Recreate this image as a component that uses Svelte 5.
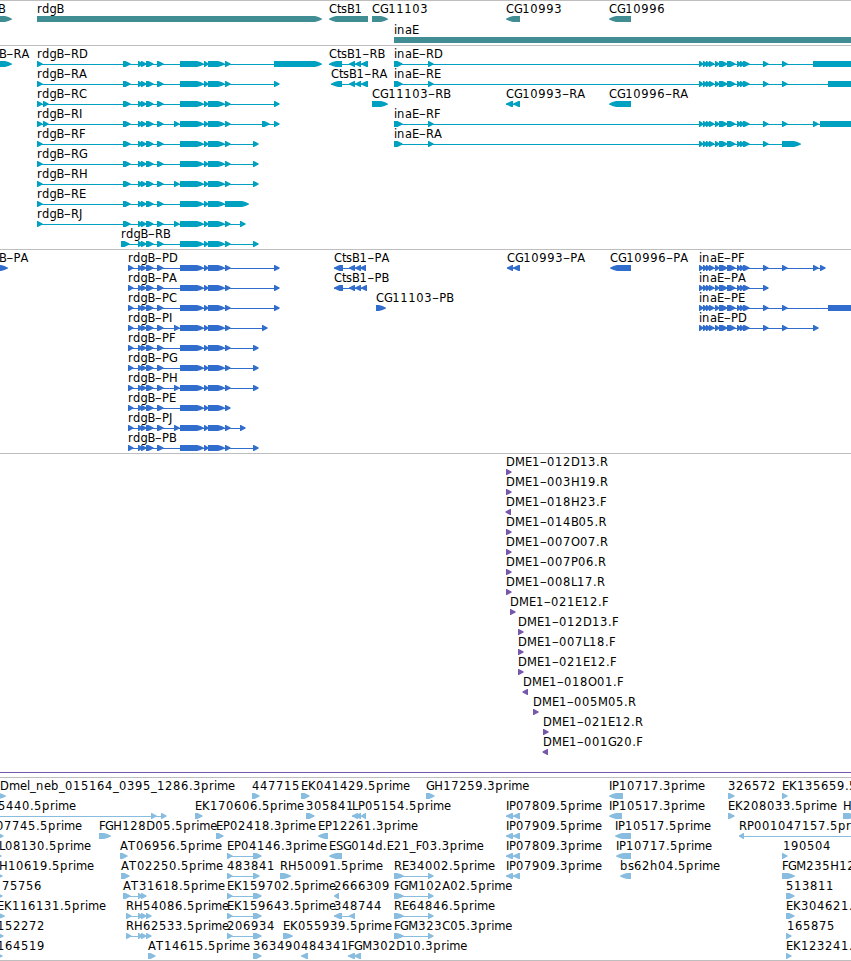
<script lang="ts">
	type Feature = {
		label: string;
		x: number;
		row: number;
		// exon blocks as [start, end]
		blocks: number[][];
		reverse?: boolean;
	};

	const width = 851;

	// glyph advances for the labels
	const advances: Record<string, number> = {
		A: 8, B: 7.5, C: 8, D: 9, E: 7, F: 6, G: 8.2, H: 9, I: 3, J: 4, K: 8, L: 6, M: 10, O: 9,
		P: 7, R: 8, S: 7, a: 7, b: 8, d: 7.5, e: 7, g: 7, h: 8, i: 3, l: 3, m: 11, n: 8, p: 8,
		r: 5, s: 6, t: 4, '-': 7, '.': 4, _: 6
	};

	// splits a label at its hyphen, which is set wider than the other glyphs
	function glyphRuns(label: string, x: number) {
		let pen = x;
		return label.split(/(-)/).map((text) => {
			const positions = [...text].map((char) => {
				const at = char === '-' ? pen - 0.5 : pen;
				pen += advances[char] ?? 8;
				return at;
			});
			return { text, positions: positions.join(' ') };
		});
	}

	function arrow([start, end]: number[], reverse = false) {
		const size = end - start;
		if (size < 10) {
			// short exons are plain triangles with a blunt back
			const back = size > 6 ? size - 5.5 : 0.8;
			if (reverse) {
				return `${end},0 ${end - back},0 ${start},2.6 ${start},3.6 ${end - back},6 ${end},6`;
			}
			const tip = end - 0.4;
			return `${start},0 ${start + back},0 ${tip},2.6 ${tip},3.6 ${start + back},6 ${start},6`;
		}
		const head = 7;
		const mid = 3.5;
		if (reverse) {
			return `${end},0 ${start + head},0 ${start + mid},0.9 ${start},2.7 ${start},3.4 ${start + mid},5.1 ${start + head},6 ${end},6`;
		}
		return `${start},0 ${end - head},0 ${end - mid},0.9 ${end},2.7 ${end},3.4 ${end - mid},5.1 ${end - head},6 ${start},6`;
	}

	const f = (
		row: number,
		x: number,
		label: string,
		blocks: number[][],
		reverse = false
	): Feature => ({ row, x, label, blocks, reverse });

	const rdgbStart = [[138, 143], [141, 147], [146, 154], [157, 164]];
	const rdgbMid = [[180, 183], [181, 204], [204, 209], [208, 225]];
	const extra = [174, 180];
	const last = [225, 231];
	const head = [[37, 43], [123, 131], ...rdgbStart];
	const core = [...rdgbStart, ...rdgbMid, last];
	const coreExtra = [...rdgbStart, extra, ...rdgbMid, last];
	const cds = [[128, 134], ...core];
	const cdsExtra = [[128, 134], ...coreExtra];

	const inaCore = [
		[699, 704], [703, 708], [706, 711], [709, 715], [715, 720], [719, 728],
		[727, 736], [737, 742], [740, 745], [743, 750], [763, 769]
	];
	const inaHead = [[394, 403], [428, 434], ...inaCore];

	const tracks = [
		{
			name: 'Genes',
			kind: 'gene',
			height: 44,
			step: 21,
			features: [
				f(0, -2, 'B', [[-20, 12]]),
				f(0, 37, 'rdgB', [[37, 322]]),
				f(0, 329, 'CtsB1', [[329, 368]], true),
				f(0, 372, 'CG11103', [[372, 388]]),
				f(0, 506, 'CG10993', [[506, 520]], true),
				f(0, 609, 'CG10996', [[609, 631]], true),
				f(1, 394, 'inaE', [[394, 900]])
			]
		},
		{
			name: 'Transcripts',
			kind: 'transcript',
			height: 203,
			step: 20,
			features: [
				f(0, -1, 'B-RA', [[-20, 12]]),
				f(0, 37, 'rdgB-RD', [[37, 43], [123, 131], ...core, [274, 322]]),
				f(1, 37, 'rdgB-RA', [[37, 43], [123, 131], ...core, [274, 280]]),
				f(2, 37, 'rdgB-RC', [[37, 43], [43, 49], [123, 131], ...core, [274, 280]]),
				f(3, 37, 'rdgB-RI', [
					[37, 43], [43, 49], [123, 131], ...coreExtra, [262, 270], [274, 280]
				]),
				f(4, 37, 'rdgB-RF', [[37, 43], [123, 131], ...core, [253, 259]]),
				f(5, 37, 'rdgB-RG', [[37, 43], [123, 131], ...core, [253, 259]]),
				f(6, 37, 'rdgB-RH', [[37, 43], [123, 131], ...coreExtra, [253, 259]]),
				f(7, 37, 'rdgB-RE', [...head, ...rdgbMid, [225, 249]]),
				f(8, 37, 'rdgB-RJ', [[37, 43], [123, 131], ...coreExtra, [240, 246]]),
				f(9, 121, 'rdgB-RB', [[121, 130], ...core, [253, 259]]),
				f(0, 329, 'CtsB1-RB', [[329, 342], [349, 355], [355, 361], [361, 368]], true),
				f(1, 331, 'CtsB1-RA', [[331, 342], [349, 355], [355, 361], [361, 368]], true),
				f(2, 372, 'CG11103-RB', [[372, 388]]),
				f(0, 394, 'inaE-RD', [...inaHead, [782, 788], [813, 900]]),
				f(1, 394, 'inaE-RE', [...inaHead, [782, 788], [828, 900]]),
				f(3, 394, 'inaE-RF', [...inaHead, [782, 788], [813, 819], [820, 900]]),
				f(4, 394, 'inaE-RA', [...inaHead, [782, 801]]),
				f(2, 506, 'CG10993-RA', [[506, 513], [513, 520]], true),
				f(2, 609, 'CG10996-RA', [[609, 631]], true)
			]
		},
		{
			name: 'Coding sequences',
			kind: 'cds',
			height: 203,
			step: 20,
			features: [
				f(0, -1, 'B-PA', [[-20, 8]]),
				f(0, 128, 'rdgB-PD', [...cds, [274, 280]]),
				f(1, 128, 'rdgB-PA', [...cds, [274, 280]]),
				f(2, 128, 'rdgB-PC', [...cds, [274, 280]]),
				f(3, 128, 'rdgB-PI', [...cdsExtra, [262, 268]]),
				f(4, 128, 'rdgB-PF', [...cds, [253, 259]]),
				f(5, 128, 'rdgB-PG', [...cds, [253, 259]]),
				f(6, 128, 'rdgB-PH', [...cdsExtra, [253, 259]]),
				f(7, 128, 'rdgB-PE', cds),
				f(8, 128, 'rdgB-PJ', [...cdsExtra, [240, 246]]),
				f(9, 128, 'rdgB-PB', [...cds, [253, 259]]),
				f(0, 334, 'CtsB1-PA', [[334, 343], [349, 355], [355, 361], [360, 366]], true),
				f(1, 334, 'CtsB1-PB', [[334, 343], [349, 355], [355, 361], [361, 367]], true),
				f(2, 376, 'CG11103-PB', [[376, 386]]),
				f(0, 507, 'CG10993-PA', [[507, 513], [513, 520]], true),
				f(0, 610, 'CG10996-PA', [[610, 631]], true),
				f(0, 699, 'inaE-PF', [...inaCore, [782, 788], [813, 819], [820, 826]]),
				f(1, 699, 'inaE-PA', inaCore),
				f(2, 699, 'inaE-PE', [...inaCore, [782, 788], [828, 900]]),
				f(3, 699, 'inaE-PD', [...inaCore, [782, 788], [813, 819]])
			]
		},
		{
			name: 'Clones',
			kind: 'clone',
			height: 323,
			step: 20,
			features: [
				f(0, 506, 'DME1-012D13.R', [[506, 512]]),
				f(1, 506, 'DME1-003H19.R', [[506, 512]]),
				f(2, 506, 'DME1-018H23.F', [[505.5, 511]], true),
				f(3, 506, 'DME1-014B05.R', [[506, 512]]),
				f(4, 506, 'DME1-007O07.R', [[506, 512]]),
				f(5, 506, 'DME1-007P06.R', [[506, 512]]),
				f(6, 506, 'DME1-008L17.R', [[506, 512]]),
				f(7, 510, 'DME1-021E12.F', [[510, 516]]),
				f(8, 518, 'DME1-012D13.F', [[518, 524]]),
				f(9, 518, 'DME1-007L18.F', [[518, 524]]),
				f(10, 518, 'DME1-021E12.F', [[518, 524]]),
				f(11, 523, 'DME1-018O01.F', [[522.5, 528]], true),
				f(12, 533, 'DME1-005M05.R', [[533, 539]]),
				f(13, 543, 'DME1-021E12.R', [[543, 549]]),
				f(14, 543, 'DME1-001G20.F', [[542.5, 548]], true)
			]
		},
		{
			name: 'ESTs',
			kind: 'est',
			height: 182,
			step: 20,
			features: [
				f(0, 0, 'Dmel_neb_015164_0395_1286.3prime', [[-4, 6]]),
				f(1, -2, '5440.5prime', [[-20, -10], [151, 157], [161, 167]]),
				f(2, -4, '07745.5prime', [[-5, 4]]),
				f(3, -1, 'L08130.5prime', [[-5, 2]]),
				f(4, -1, 'H10619.5prime', [[-5, 3]]),
				f(5, 2, '75756', [[-5, 3]]),
				f(6, -3, 'EK116131.5prime', [[-5, 5]]),
				f(7, -3, '152272', [[-5, 4]]),
				f(8, -3, '164519', [[-5, 3]]),
				f(2, 99, 'FGH128D05.5prime', [[99, 111]]),
				f(3, 120, 'AT06956.5prime', [[120, 128]]),
				f(4, 121, 'AT02250.5prime', [[121, 130]]),
				f(5, 123, 'AT31618.5prime', [[123, 131], [138, 143], [141, 147]]),
				f(6, 126, 'RH54086.5prime', [[126, 132], [138, 143], [141, 147], [146, 152]]),
				f(7, 126, 'RH62533.5prime', [[126, 132], [138, 143], [141, 147], [146, 152]]),
				f(8, 148, 'AT14615.5prime', [[148, 156]]),
				f(0, 252, '447715', [[252, 260]]),
				f(1, 195, 'EK170606.5prime', [[195, 203]]),
				f(2, 216, 'EP02418.3prime', [[216, 224]]),
				f(3, 227, 'EP04146.3prime', [[227, 233], [253, 262]]),
				f(4, 227, '483841', [[227, 233], [253, 260]]),
				f(5, 227, 'EK159702.5prime', [[227, 233], [253, 262]]),
				f(6, 227, 'EK159643.5prime', [[227, 233], [253, 262]]),
				f(7, 227, '206934', [[227, 233], [253, 262]]),
				f(8, 253, '363490', [[253, 262]]),
				f(0, 301, 'EK041429.5prime', [[301, 310]]),
				f(1, 306, '305841', [[306, 315]]),
				f(1, 352, 'LP05154.5prime', [[352, 358], [355, 361], [361, 366]], true),
				f(2, 318, 'EP12261.3prime', [[318, 328]], true),
				f(3, 329, 'ESG014d.E21_F03.3prime', [[329, 342]], true),
				f(4, 280, 'RH50091.5prime', [[280, 291]]),
				f(5, 334, '2666309', [[334, 339]], true),
				f(6, 334, '348744', [[334, 342], [349, 355]], true),
				f(7, 283, 'EK055939.5prime', [[283, 293]]),
				f(8, 301, '484341', [[301, 308]], true),
				f(8, 348, 'FGM302D10.3prime', [[348, 355], [354, 361]], true),
				f(0, 426, 'GH17259.3prime', [[426, 435]]),
				f(4, 394, 'RE34002.5prime', [[394, 404], [428, 434]]),
				f(5, 394, 'FGM102A02.5prime', [[394, 404], [428, 434]]),
				f(6, 394, 'RE64846.5prime', [[394, 404], [428, 434]]),
				f(7, 394, 'FGM323C05.3prime', [[394, 404], [428, 434]]),
				f(1, 506, 'IP07809.5prime', [[506, 513], [513, 520]], true),
				f(2, 506, 'IP07909.5prime', [[506, 513], [513, 520]], true),
				f(3, 506, 'IP07809.3prime', [[506, 513], [513, 520]], true),
				f(4, 506, 'IP07909.3prime', [[506, 513], [513, 520]], true),
				f(0, 609, 'IP10717.3prime', [[609, 623]], true),
				f(1, 609, 'IP10517.3prime', [[609, 622]], true),
				f(2, 615, 'IP10517.5prime', [[615, 631]], true),
				f(3, 616, 'IP10717.5prime', [[616, 631]], true),
				f(4, 620, 'bs62h04.5prime', [[620, 631]], true),
				f(0, 728, '326572', [[728, 735]]),
				f(1, 728, 'EK208033.5prime', [[728, 735]]),
				f(2, 739, 'RP001047157.5prime', [[739, 744], [900, 910]], true),
				f(0, 782, 'EK135659.5prime', [[782, 788]]),
				f(1, 843, 'H', [[843, 856]]),
				f(3, 783, '190504', [[782, 788]]),
				f(4, 782, 'FGM235H12', [[782, 795]]),
				f(5, 786, '513811', [[786, 795]]),
				f(6, 786, 'EK304621.5prime', [[786, 795]]),
				f(7, 787, '165875', [[786, 792]]),
				f(8, 786, 'EK123241.5prime', [[786, 792]])
			]
		}
	];
</script>

<main class="browser">
	{#each tracks as track (track.name)}
		<section class="track {track.kind}" aria-label={track.name}>
			<svg {width} height={track.height} viewBox="0 0 {width} {track.height}">
				{#each track.features as feature}
					{@const first = feature.blocks[0]}
					{@const final = feature.blocks[feature.blocks.length - 1]}
					<g transform="translate(0 {feature.row * track.step})">
						<text y="12">{#each glyphRuns(feature.label, feature.x) as run}<tspan
							class:dash={run.text === '-'}
							x={run.positions}
							y={run.text === '-' ? 14 : 12}>{run.text}</tspan>{/each}</text>
						<g transform="translate(0 15)">
							{#if feature.blocks.length > 1}
								<rect class="intron" x={first[0]} y="3" width={final[1] - first[0] - 1} height="1" />
							{/if}
							{#each feature.blocks as block}
								<polygon points={arrow(block, feature.reverse)} />
							{/each}
						</g>
					</g>
				{/each}
				{#if track.kind === 'clone'}
					<rect class="intron" x="0" y="318" {width} height="1" />
				{/if}
			</svg>
		</section>
	{/each}
</main>

<style>
	:global(body) {
		margin: 0;
		background: #ffffff;
	}

	.browser {
		width: 851px;
		overflow: hidden;
		border-bottom: 1px solid #bebebe;
	}

	.track {
		border-top: 1px solid #bebebe;
	}

	svg {
		display: block;
	}

	text {
		fill: #000000;
		font-family: 'DejaVu Sans', sans-serif;
		font-size: 11.5px;
	}

	.dash {
		font-size: 21px;
		font-weight: 200;
	}

	.intron {
		shape-rendering: crispEdges;
	}

	.gene {
		fill: #408e94;
	}

	.transcript {
		fill: #00a0c0;
	}

	.cds {
		fill: #316dcc;
	}

	.clone {
		fill: #7558aa;
	}

	.est {
		fill: #89bddf;
	}
</style>
